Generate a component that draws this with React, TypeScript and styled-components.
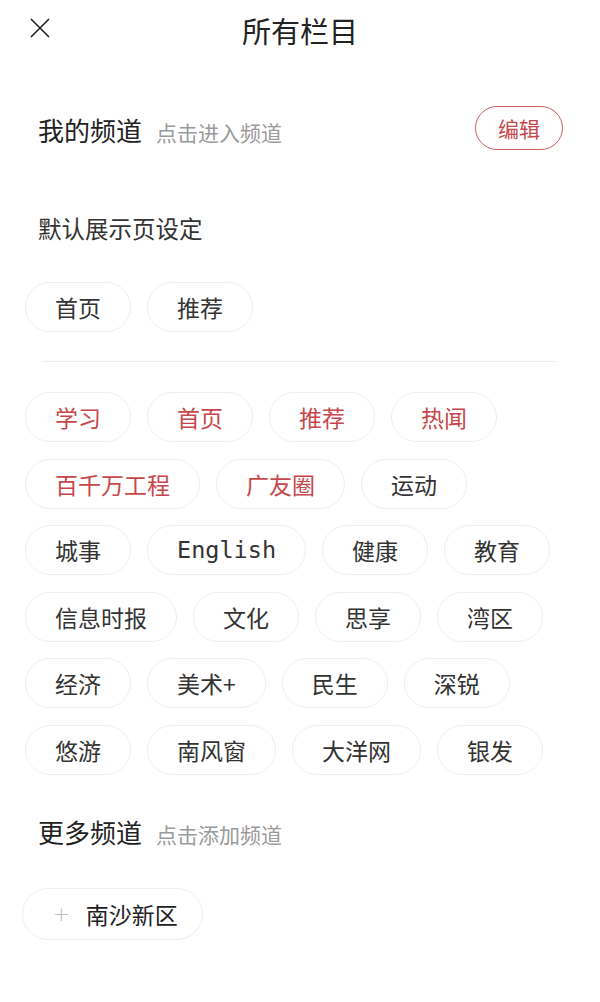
import React from "react";
import styled, { createGlobalStyle } from "styled-components";

const Global = createGlobalStyle`
  html, body { margin: 0; padding: 0; background: #fff; }
  body { font-family: "Noto Sans CJK SC", "Noto Sans", sans-serif; color: #333; }
  * { box-sizing: border-box; }
`;

const RED = "#c6474b";

const Page = styled.div`
  width: 600px;
  min-height: 1002px;
  background: #fff;
  display: flex;
  flex-direction: column;
`;

const Header = styled.header`
  height: 60px;
  display: grid;
  grid-template-columns: 1fr auto 1fr;
  align-items: center;
  padding: 0 30px;
`;

const CloseBtn = styled.button`
  width: 20px;
  height: 20px;
  padding: 0;
  border: 0;
  background: none;
  justify-self: start;
  margin-top: -4px;
  display: flex;
`;

const Title = styled.h1`
  margin: 0;
  font-size: 29px;
  font-weight: 400;
  color: #222;
  line-height: 40px;
`;

const SectionHead = styled.div<{ $mt: number }>`
  display: flex;
  align-items: center;
  justify-content: space-between;
  padding: 0 37px 0 38px;
  margin-top: ${(p) => p.$mt}px;
  height: 44px;
`;

const HeadLeft = styled.div`
  display: flex;
  align-items: baseline;
  gap: 14px;
  padding-top: 3px;
`;

const HeadTitle = styled.span`
  font-size: 26px;
  color: #222;
  line-height: 36px;
`;

const HeadSub = styled.span`
  font-size: 21px;
  color: #9a9a9a;
`;

const EditBtn = styled.button`
  width: 88px;
  height: 44px;
  border: 1.5px solid #cd5f62;
  border-radius: 22px;
  background: #fff;
  color: ${RED};
  font-family: inherit;
  font-size: 21px;
  padding: 0;
`;

const SubTitle = styled.div`
  margin-top: 62px;
  padding-left: 38px;
  font-size: 23.5px;
  color: #333;
  line-height: 32px;
`;

const ChipWrap = styled.div<{ $mt: number; $left?: number }>`
  display: flex;
  flex-wrap: wrap;
  column-gap: 16px;
  row-gap: 16.6px;
  padding: 0 20px 0 ${(p) => p.$left ?? 25}px;
  margin-top: ${(p) => p.$mt}px;
`;

const Chip = styled.div<{ $red?: boolean; $mono?: boolean }>`
  height: 50px;
  padding: 0 29px;
  border: 1.5px solid #efefef;
  border-radius: 25px;
  display: flex;
  align-items: center;
  justify-content: center;
  font-size: ${(p) => (p.$mono ? 23.5 : 23)}px;
  color: ${(p) => (p.$red ? RED : "#333")};
  font-family: ${(p) =>
    p.$mono ? `"DejaVu Sans Mono", monospace` : "inherit"};
  white-space: nowrap;
`;

const AddChip = styled.div`
  height: 52px;
  padding: 0 24px 0 30px;
  border: 1.5px solid #efefef;
  border-radius: 26px;
  display: flex;
  align-items: center;
  font-size: 23px;
  color: #222;
  gap: 16px;
`;

const Plus = styled.span`
  font-size: 20px;
  color: #bbb;
  font-family: "DejaVu Sans", sans-serif;
  font-weight: 300;
`;

const Divider = styled.hr`
  border: 0;
  height: 1px;
  background: #efefef;
  margin: 29px 43px 0 42px;
`;

const defaults = ["首页", "推荐"];
const mine: { t: string; red?: boolean; mono?: boolean }[] = [
  { t: "学习", red: true },
  { t: "首页", red: true },
  { t: "推荐", red: true },
  { t: "热闻", red: true },
  { t: "百千万工程", red: true },
  { t: "广友圈", red: true },
  { t: "运动" },
  { t: "城事" },
  { t: "English", mono: true },
  { t: "健康" },
  { t: "教育" },
  { t: "信息时报" },
  { t: "文化" },
  { t: "思享" },
  { t: "湾区" },
  { t: "经济" },
  { t: "美术+" },
  { t: "民生" },
  { t: "深锐" },
  { t: "悠游" },
  { t: "南风窗" },
  { t: "大洋网" },
  { t: "银发" },
];

export default function App() {
  return (
    <Page>
      <Global />
      <Header>
        <CloseBtn aria-label="关闭">
          <svg width="20" height="20" viewBox="0 0 20 20">
            <path d="M1 1 L19 19 M19 1 L1 19" stroke="#222" strokeWidth="1.6" fill="none" />
          </svg>
        </CloseBtn>
        <Title>所有栏目</Title>
        <span />
      </Header>

      <SectionHead $mt={46}>
        <HeadLeft>
          <HeadTitle>我的频道</HeadTitle>
          <HeadSub>点击进入频道</HeadSub>
        </HeadLeft>
        <EditBtn>编辑</EditBtn>
      </SectionHead>

      <SubTitle>默认展示页设定</SubTitle>

      <ChipWrap $mt={38}>
        {defaults.map((d) => (
          <Chip key={d}>{d}</Chip>
        ))}
      </ChipWrap>

      <Divider />

      <ChipWrap $mt={30}>
        {mine.map((c) => (
          <Chip key={c.t} $red={c.red} $mono={c.mono}>
            {c.t}
          </Chip>
        ))}
      </ChipWrap>

      <SectionHead $mt={34}>
        <HeadLeft>
          <HeadTitle>更多频道</HeadTitle>
          <HeadSub>点击添加频道</HeadSub>
        </HeadLeft>
      </SectionHead>

      <ChipWrap $mt={35} $left={22}>
        <AddChip>
          <Plus>+</Plus>
          南沙新区
        </AddChip>
      </ChipWrap>
    </Page>
  );
}
